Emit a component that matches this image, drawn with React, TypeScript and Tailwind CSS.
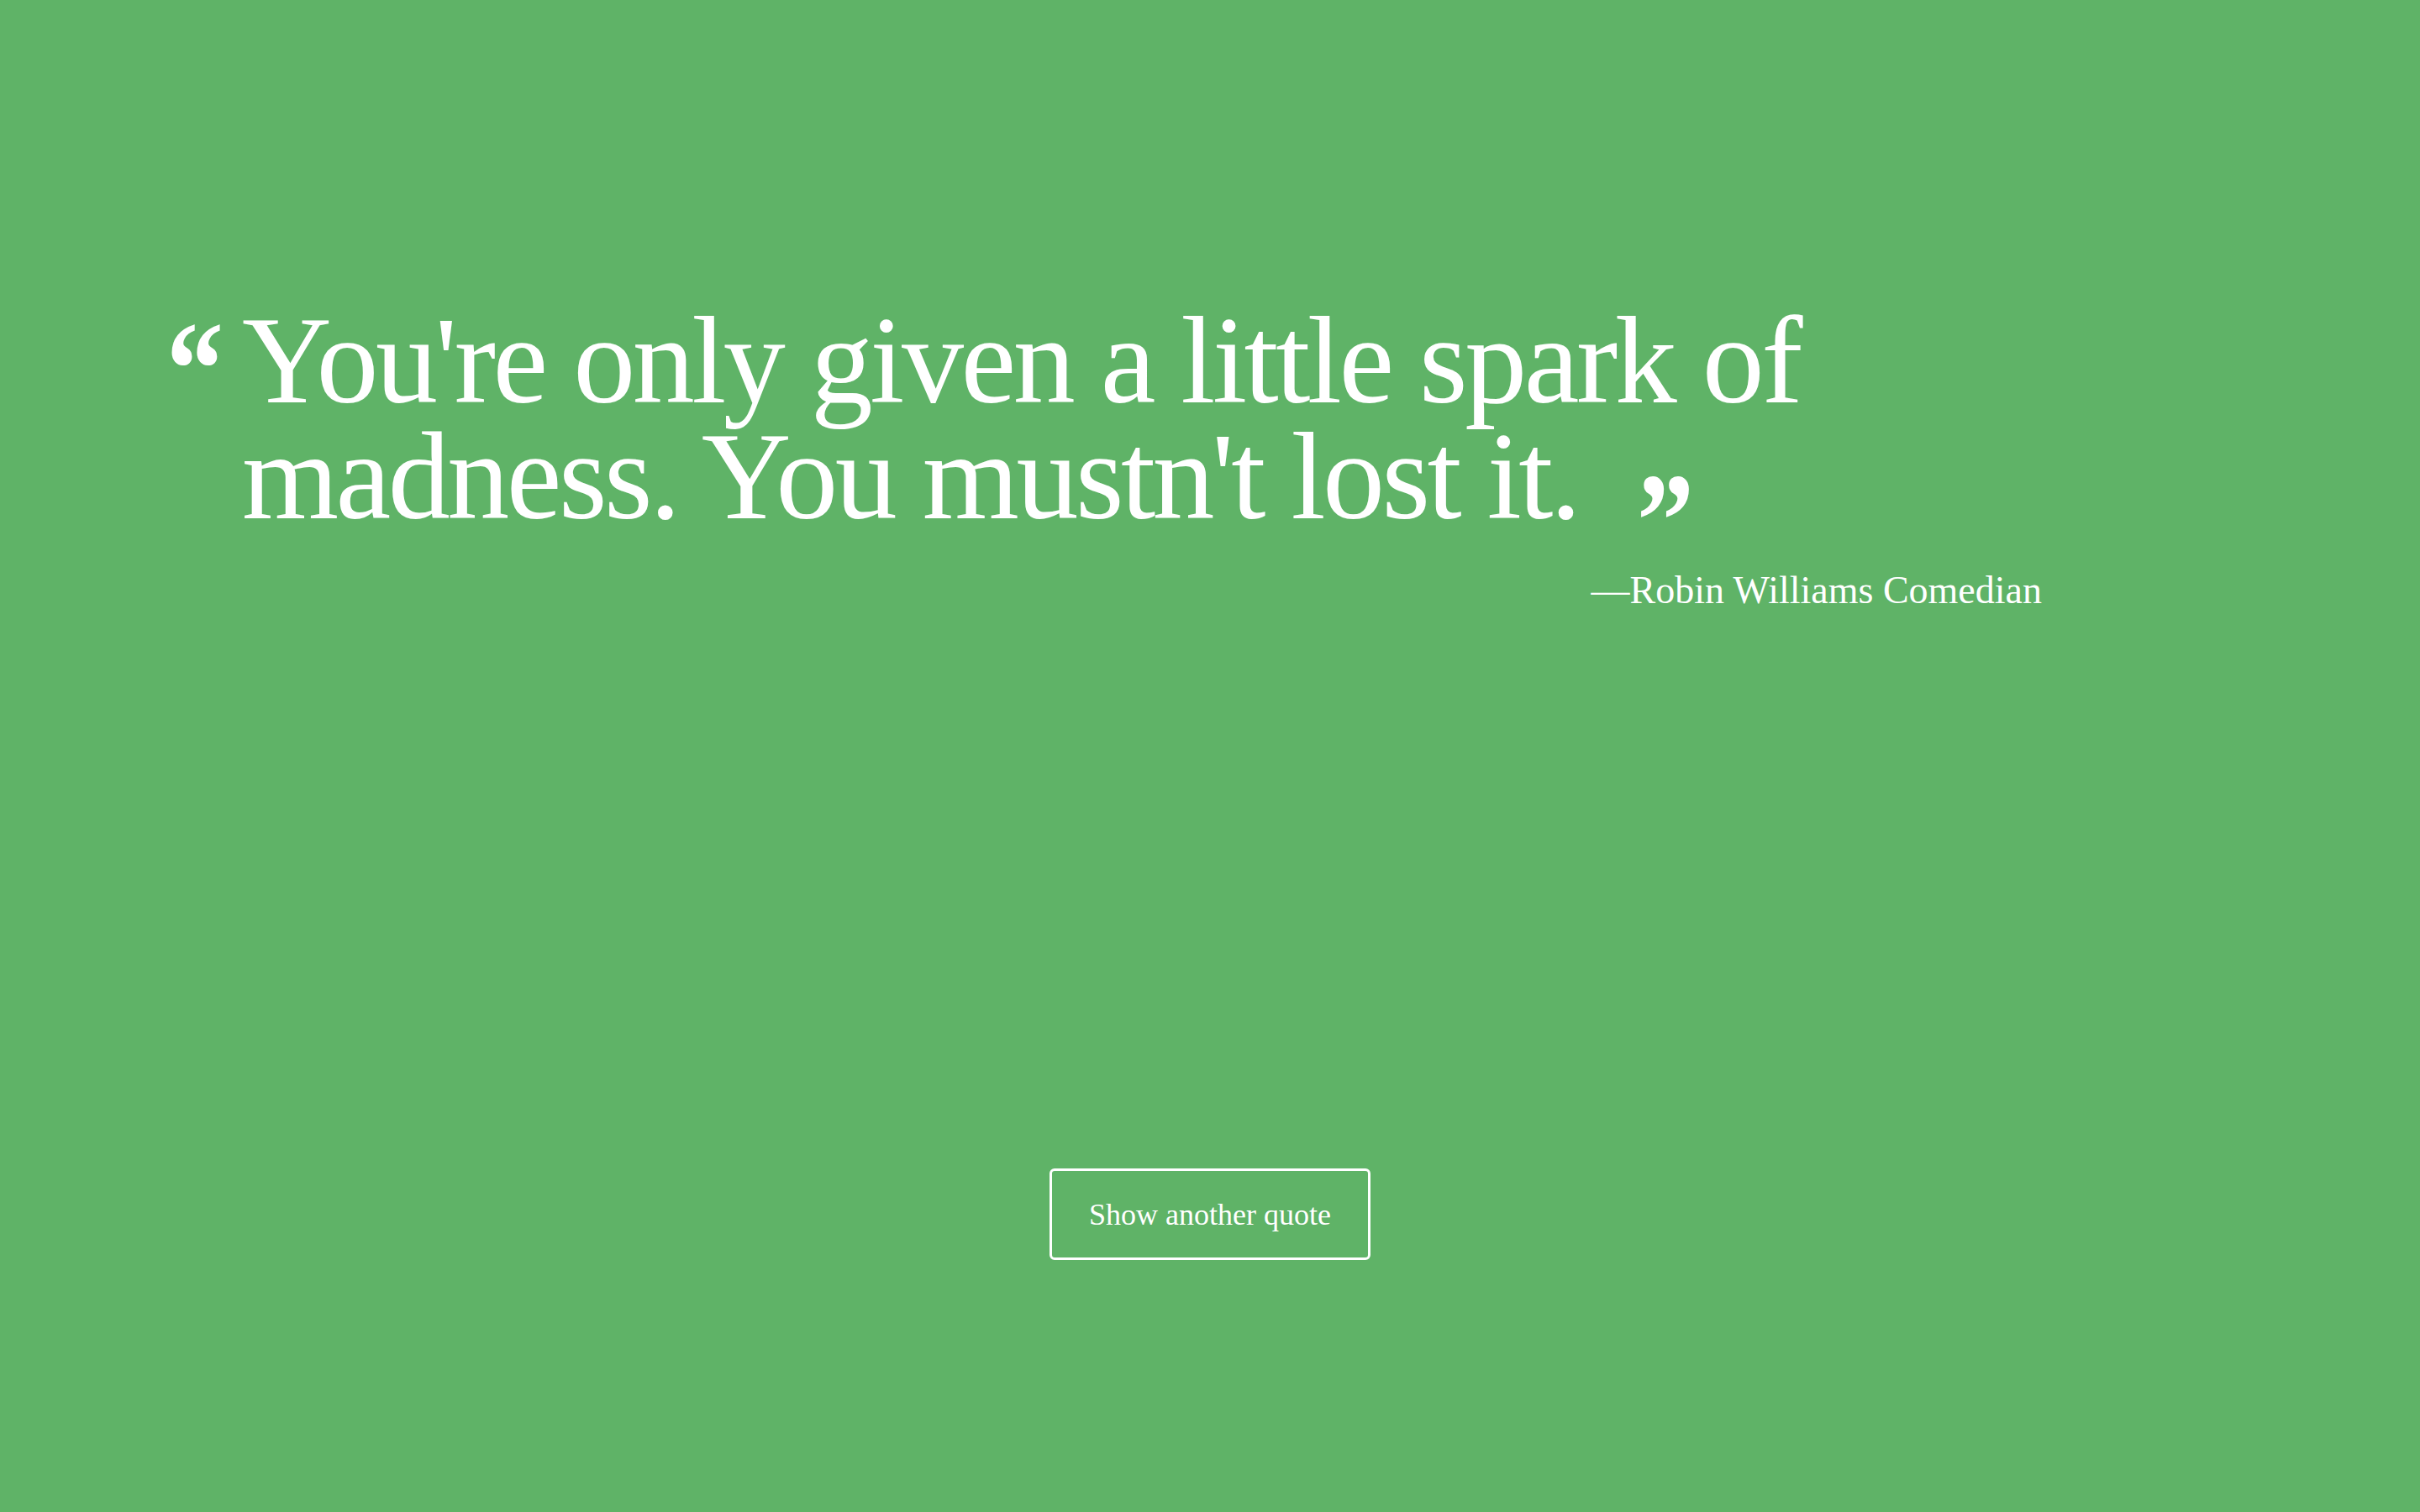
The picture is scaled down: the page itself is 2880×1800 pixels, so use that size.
import React from "react";

const serif = "font-['Liberation_Serif','Times_New_Roman',serif]";

const App = () => {
  return (
    <div className={`min-h-screen bg-[#5fb367] text-white ${serif}`}>
      <div className="pt-[360px] pl-[198px] w-[2430px]">
        <blockquote className="flex">
          <span className="w-[90px] shrink-0 font-bold text-[160px] leading-none">
            <span className="inline-block origin-left scale-x-[0.85]">&ldquo;</span>
          </span>
          <p className="text-[148px] leading-[138px] tracking-[-3.5px]">
            You're only given a little spark of madness. You mustn't lost it.{" "}
            <span className="inline-block ml-[36px] origin-left scale-x-[0.85] font-bold text-[160px] leading-[0] align-[-57px]">
              &rdquo;
            </span>
          </p>
        </blockquote>
        <p className="mt-[44px] text-right text-[46px] leading-none">
          &mdash;Robin Williams Comedian
        </p>
      </div>
      <div className="flex justify-center mt-[665px]">
        <button className="w-[382px] h-[109px] border-[3px] border-white rounded-md text-[36px] text-white">
          Show another quote
        </button>
      </div>
    </div>
  );
};

export default App;
